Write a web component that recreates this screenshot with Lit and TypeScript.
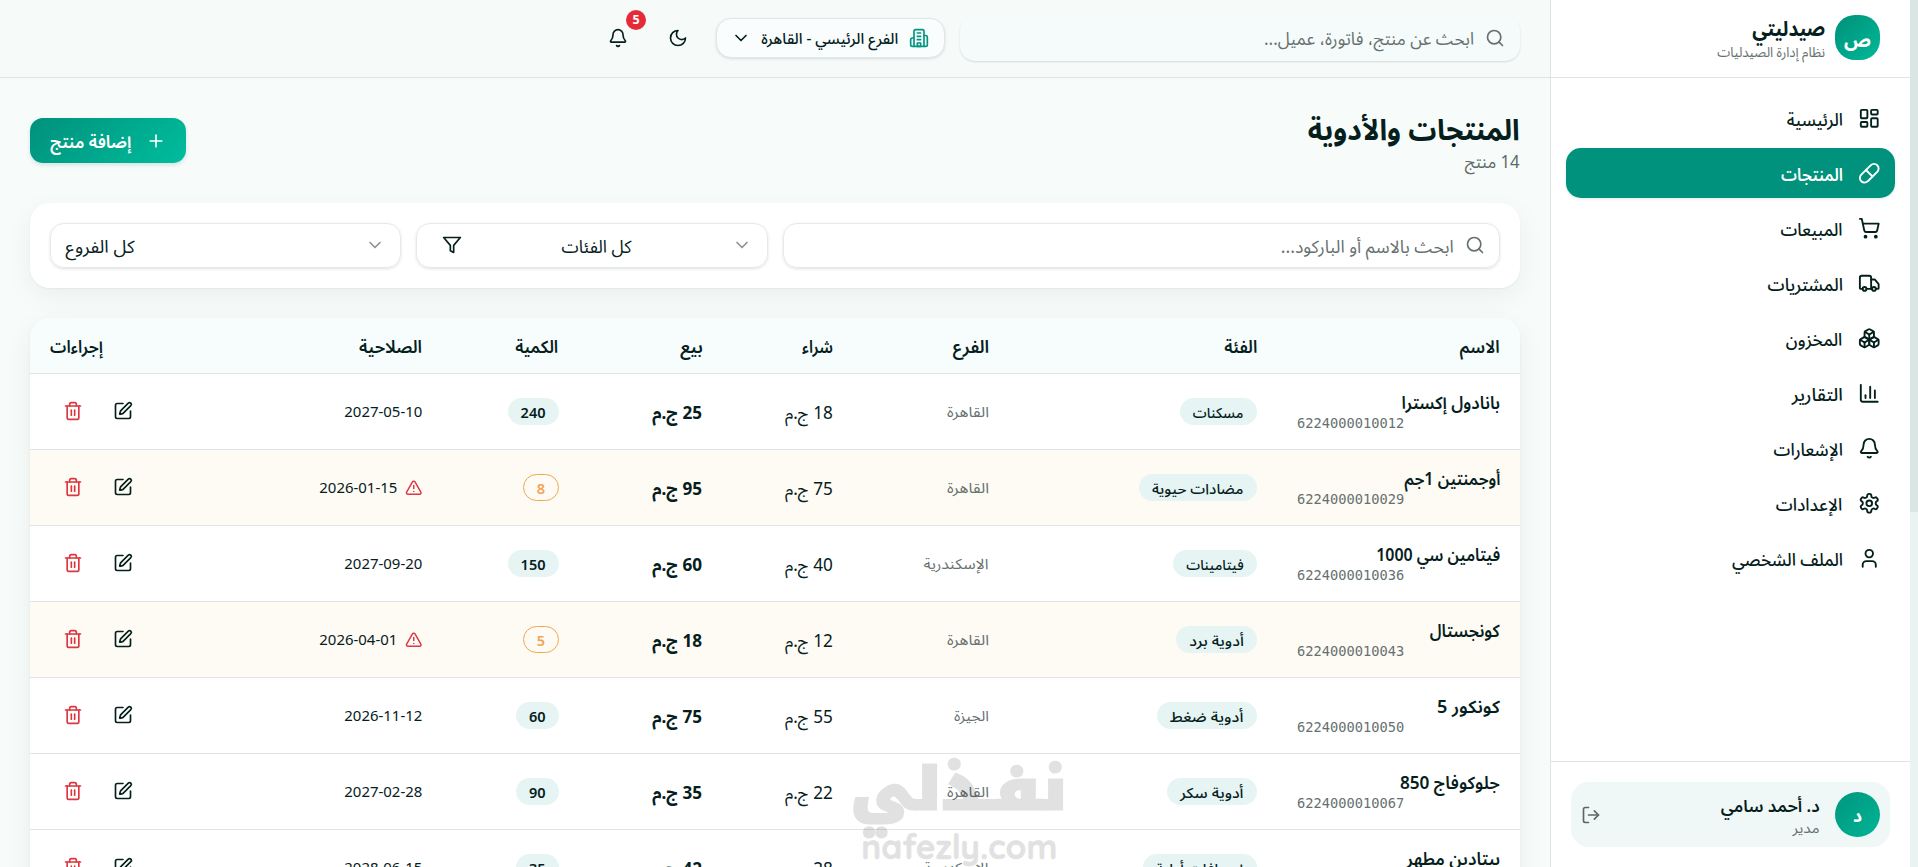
import { LitElement, html, css, svg, nothing } from "lit";
import { customElement, property, query } from "lit/decorators.js";

/* Lucide-style icon set */
const ICONS: Record<string, unknown> = {
  dashboard: svg`<rect width="7" height="9" x="3" y="3" rx="1"/><rect width="7" height="5" x="14" y="3" rx="1"/><rect width="7" height="9" x="14" y="12" rx="1"/><rect width="7" height="5" x="3" y="16" rx="1"/>`,
  pill: svg`<path d="m10.5 20.5 10-10a4.95 4.95 0 1 0-7-7l-10 10a4.95 4.95 0 1 0 7 7Z"/><path d="m8.5 8.5 7 7"/>`,
  cart: svg`<circle cx="8" cy="21" r="1"/><circle cx="19" cy="21" r="1"/><path d="M2.05 2.05h2l2.66 12.42a2 2 0 0 0 2 1.58h9.78a2 2 0 0 0 1.95-1.57l1.65-7.43H5.12"/>`,
  truck: svg`<path d="M14 18V6a2 2 0 0 0-2-2H4a2 2 0 0 0-2 2v11a1 1 0 0 0 1 1h2"/><path d="M15 18H9"/><path d="M19 18h2a1 1 0 0 0 1-1v-3.65a1 1 0 0 0-.22-.624l-3.48-4.35A1 1 0 0 0 17.52 8H14"/><circle cx="17" cy="18" r="2"/><circle cx="7" cy="18" r="2"/>`,
  boxes: svg`<path d="M2.97 12.92A2 2 0 0 0 2 14.63v3.24a2 2 0 0 0 .97 1.71l3 1.8a2 2 0 0 0 2.06 0L12 19v-5.5l-5-3-4.03 2.42Z"/><path d="m7 16.5-4.74-2.85"/><path d="m7 16.5 5-3"/><path d="M7 16.5v5.17"/><path d="M12 13.5V19l3.97 2.38a2 2 0 0 0 2.06 0l3-1.8a2 2 0 0 0 .97-1.71v-3.24a2 2 0 0 0-.97-1.71L17 10.5l-5 3Z"/><path d="m17 16.5-5-3"/><path d="m17 16.5 4.74-2.85"/><path d="M17 16.5v5.17"/><path d="M7.97 4.42A2 2 0 0 0 7 6.13v4.37l5 3 5-3V6.13a2 2 0 0 0-.97-1.71l-3-1.8a2 2 0 0 0-2.06 0l-3 1.8Z"/><path d="M12 8 7.26 5.15"/><path d="m12 8 4.74-2.85"/><path d="M12 13.5V8"/>`,
  chart: svg`<path d="M3 3v16a2 2 0 0 0 2 2h16"/><path d="M18 17V9"/><path d="M13 17V5"/><path d="M8 17v-3"/>`,
  bell: svg`<path d="M10.268 21a2 2 0 0 0 3.464 0"/><path d="M3.262 15.326A1 1 0 0 0 4 17h16a1 1 0 0 0 .74-1.673C19.41 13.956 18 12.499 18 8A6 6 0 0 0 6 8c0 4.499-1.411 5.956-2.738 7.326"/>`,
  settings: svg`<path d="M12.22 2h-.44a2 2 0 0 0-2 2v.18a2 2 0 0 1-1 1.73l-.43.25a2 2 0 0 1-2 0l-.15-.08a2 2 0 0 0-2.73.73l-.22.38a2 2 0 0 0 .73 2.73l.15.1a2 2 0 0 1 1 1.72v.51a2 2 0 0 1-1 1.74l-.15.09a2 2 0 0 0-.73 2.73l.22.38a2 2 0 0 0 2.73.73l.15-.08a2 2 0 0 1 2 0l.43.25a2 2 0 0 1 1 1.73V20a2 2 0 0 0 2 2h.44a2 2 0 0 0 2-2v-.18a2 2 0 0 1 1-1.73l.43-.25a2 2 0 0 1 2 0l.15.08a2 2 0 0 0 2.73-.73l.22-.39a2 2 0 0 0-.73-2.73l-.15-.08a2 2 0 0 1-1-1.74v-.5a2 2 0 0 1 1-1.74l.15-.09a2 2 0 0 0 .73-2.73l-.22-.38a2 2 0 0 0-2.73-.73l-.15.08a2 2 0 0 1-2 0l-.43-.25a2 2 0 0 1-1-1.73V4a2 2 0 0 0-2-2z"/><circle cx="12" cy="12" r="3"/>`,
  user: svg`<path d="M19 21v-2a4 4 0 0 0-4-4H9a4 4 0 0 0-4 4v2"/><circle cx="12" cy="7" r="4"/>`,
  logout: svg`<path d="m16 17 5-5-5-5"/><path d="M21 12H9"/><path d="M9 21H5a2 2 0 0 1-2-2V5a2 2 0 0 1 2-2h4"/>`,
  search: svg`<circle cx="11" cy="11" r="8"/><path d="m21 21-4.34-4.34"/>`,
  building: svg`<path d="M6 22V4a2 2 0 0 1 2-2h8a2 2 0 0 1 2 2v18Z"/><path d="M6 12H4a2 2 0 0 0-2 2v6a2 2 0 0 0 2 2h2"/><path d="M18 9h2a2 2 0 0 1 2 2v9a2 2 0 0 1-2 2h-2"/><path d="M10 6h4"/><path d="M10 10h4"/><path d="M10 14h4"/><path d="M10 18h4v4h-4z"/>`,
  chevron: svg`<path d="m6 9 6 6 6-6"/>`,
  moon: svg`<path d="M12 3a6 6 0 0 0 9 9 9 9 0 1 1-9-9Z"/>`,
  plus: svg`<path d="M5 12h14"/><path d="M12 5v14"/>`,
  filter: svg`<path d="M22 3H2l8 9.46V19l4 2v-8.54L22 3z"/>`,
  edit: svg`<path d="M12 3H5a2 2 0 0 0-2 2v14a2 2 0 0 0 2 2h14a2 2 0 0 0 2-2v-7"/><path d="M18.375 2.625a1 1 0 0 1 3 3l-9.013 9.014a2 2 0 0 1-.853.505l-2.873.84a.5.5 0 0 1-.62-.62l.84-2.873a2 2 0 0 1 .506-.852z"/>`,
  trash: svg`<path d="M3 6h18"/><path d="M19 6v14a2 2 0 0 1-2 2H7a2 2 0 0 1-2-2V6"/><path d="M8 6V4a2 2 0 0 1 2-2h4a2 2 0 0 1 2 2v2"/><path d="M10 11v6"/><path d="M14 11v6"/>`,
  alert: svg`<path d="m21.73 18-8-14a2 2 0 0 0-3.48 0l-8 14A2 2 0 0 0 4 21h16a2 2 0 0 0 1.73-3"/><path d="M12 9v4"/><path d="M12 17h.01"/>`,
};

@customElement("ui-icon")
export class UiIcon extends LitElement {
  static styles = css`
    :host { display: inline-flex; flex: none; width: 20px; height: 20px; }
    svg { width: 100%; height: 100%; display: block; overflow: visible; }
  `;
  @property() name = "";
  render() {
    return html`<svg viewBox="0 0 24 24" fill="none" stroke="currentColor" stroke-width="2" stroke-linecap="round" stroke-linejoin="round">${ICONS[this.name]}</svg>`;
  }
}

/* One-line label that condenses or stretches its text to a set width */
@customElement("fit-text")
export class FitText extends LitElement {
  static styles = css`
    :host { display: inline-block; flex: none; white-space: nowrap; vertical-align: top; }
    .ink { display: inline-block; transform-origin: 100% 50%; vertical-align: top; }
  `;
  @property({ type: Number }) w = 0;
  @query(".ink") ink!: HTMLElement;
  render() {
    return html`<span class="ink"><slot></slot></span>`;
  }
  firstUpdated() {
    const natural = this.ink.offsetWidth ? this.ink.getBoundingClientRect().width : 0;
    if (!natural || !this.w) return;
    this.style.width = `${this.w}px`;
    this.ink.style.transform = `scaleX(${this.w / natural})`;
    this.ink.style.marginLeft = `${this.w - natural}px`;
  }
}

type Label = [string, number];
interface Product {
  name: Label; code: string; cat: Label; branch: Label;
  buy: number; sell: number; qty: number; date: string; low?: boolean;
}

const CAIRO: Label = ["القاهرة", 42];
const ALEX: Label = ["الإسكندرية", 65];

const NAV: [string, string, number][] = [
  ["dashboard", "الرئيسية", 56],
  ["pill", "المنتجات", 62],
  ["cart", "المبيعات", 62],
  ["truck", "المشتريات", 75.5],
  ["boxes", "المخزون", 56.5],
  ["chart", "التقارير", 51],
  ["bell", "الإشعارات", 69.5],
  ["settings", "الإعدادات", 66.5],
  ["user", "الملف الشخصي", 111],
];

const HEADS: Label[] = [
  ["الاسم", 40], ["الفئة", 33], ["الفرع", 36.5], ["شراء", 31],
  ["بيع", 22.5], ["الكمية", 43], ["الصلاحية", 63], ["إجراءات", 53],
];

const PRODUCTS: Product[] = [
  { name: ["بانادول إكسترا", 98.5], code: "6224000010012", cat: ["مسكنات", 51], branch: CAIRO, buy: 18, sell: 25, qty: 240, date: "2027-05-10" },
  { name: ["أوجمنتين 1جم", 96], code: "6224000010029", cat: ["مضادات حيوية", 92], branch: CAIRO, buy: 75, sell: 95, qty: 8, date: "2026-01-15", low: true },
  { name: ["فيتامين سي 1000", 124], code: "6224000010036", cat: ["فيتامينات", 58], branch: ALEX, buy: 40, sell: 60, qty: 150, date: "2027-09-20" },
  { name: ["كونجستال", 70], code: "6224000010043", cat: ["أدوية برد", 55], branch: CAIRO, buy: 12, sell: 18, qty: 5, date: "2026-04-01", low: true },
  { name: ["كونكور 5", 63], code: "6224000010050", cat: ["أدوية ضغط", 74], branch: ["الجيزة", 35], buy: 55, sell: 75, qty: 60, date: "2026-11-12" },
  { name: ["جلوكوفاج 850", 100], code: "6224000010067", cat: ["أدوية سكر", 64], branch: CAIRO, buy: 22, sell: 35, qty: 90, date: "2027-02-28" },
  { name: ["بيتادين مطهر", 94], code: "6224000010074", cat: ["إسعافات أولية", 88], branch: ALEX, buy: 28, sell: 42, qty: 35, date: "2028-06-15" },
];

@customElement("app-root")
export class AppRoot extends LitElement {
  static styles = css`
    :host {
      display: flex; direction: rtl; position: relative; box-sizing: border-box;
      width: 100%; height: 867px; overflow: hidden;
      background: #f7fcfb; color: #05201c;
      font: 400 17.5px/25px "Noto Sans", "Noto Sans Arabic", "DejaVu Sans", sans-serif;
    }
    * { box-sizing: border-box; }

    .scrollbar { flex: none; width: 8px; background: #eaf3f1; }
    .thumb { height: 512px; background: #dbe5e3; }

    .side { flex: none; width: 360px; display: flex; flex-direction: column; background: #fefffe; border-left: 1px solid #dfe5e4; }
    .brand { height: 78px; display: flex; align-items: center; gap: 10px; padding: 0 30px 3px 0; border-bottom: 1px solid #dfe5e4; }
    .logo { width: 45px; height: 45px; flex: none; display: flex; align-items: center; justify-content: center; border-radius: 20px; padding-top: 6px; background: linear-gradient(135deg, #009079, #00b998); color: #fff; font-size: 19px; font-weight: 700; line-height: 28px; }
    .brand-text { display: flex; flex-direction: column; align-items: flex-start; }
    .brand-name { font-size: 21px; font-weight: 700; line-height: 25px; margin-top: 3px; }
    .brand-sub { font-size: 14px; line-height: 20px; color: #66716f; margin-top: 1px; }

    .nav { flex: 1; display: flex; flex-direction: column; gap: 5px; padding: 15px; }
    .item { height: 50px; display: flex; align-items: center; gap: 15px; padding: 0 15px; border-radius: 15px; font-weight: 500; }
    .item ui-icon { width: 22.5px; height: 22.5px; }
    .item fit-text { margin-top: 2px; }
    .item.active { background: #00927c; color: #fff; font-weight: 600; box-shadow: 0 1px 3px rgba(0, 80, 66, .12); }

    .foot { border-top: 1px solid #dfe5e4; padding: 20px; }
    .me { height: 65px; display: flex; align-items: center; gap: 15px; padding: 10px; border-radius: 18px; background: #f0f8f7; }
    .avatar { width: 45px; height: 45px; flex: none; display: flex; align-items: center; justify-content: center; border-radius: 50%; padding-top: 1px; background: linear-gradient(135deg, #009680, #00b494); color: #fff; font-weight: 700; }
    .me-text { flex: 1; display: flex; flex-direction: column; align-items: flex-start; padding-top: 1px; }
    .me-name { font-weight: 600; font-size: 17px; line-height: 24px; }
    .me-role { font-size: 14px; line-height: 19px; color: #66716f; }
    .me ui-icon { color: #5b6765; }

    .main { flex: 1; min-width: 0; display: flex; flex-direction: column; }
    .top { flex: none; height: 78px; display: flex; align-items: center; gap: 15px; padding: 0 30px 1px; border-bottom: 1px solid #dfe5e4; background: #f6fbfa; }
    .top-search { width: 560px; height: 45px; display: flex; align-items: center; gap: 11px; padding: 0 15px; border-radius: 15px; background: #f5fbfa; color: #66716f; box-shadow: 0 1px 2px rgba(0, 20, 15, .14); }
    .top-search fit-text, .field fit-text { margin-top: 1px; }
    .branch { width: 229px; height: 40px; display: flex; align-items: center; justify-content: space-between; padding: 0 15px 0 14px; border-radius: 15px; border: 1px solid #e0e7e6; background: #f9fdfd; box-shadow: 0 1px 3px rgba(0, 20, 15, .12); font-size: 15px; font-weight: 500; margin-left: 1px; }
    .branch .place { color: #009680; }
    .round { position: relative; width: 45px; height: 45px; display: flex; align-items: center; justify-content: center; }
    .count { position: absolute; top: -6px; right: -6px; width: 20px; height: 20px; border-radius: 50%; background: #e62b36; color: #fff; font-size: 12.5px; font-weight: 700; line-height: 20px; text-align: center; }

    .content { display: flex; flex-direction: column; padding: 0 30px; }
    .intro { height: 125px; display: flex; justify-content: space-between; align-items: flex-start; }
    .titles { display: flex; flex-direction: column; align-items: flex-start; padding-top: 33px; }
    .title { font-size: 29px; font-weight: 700; line-height: 36px; }
    .total { color: #5f6b69; line-height: 25px; margin-top: 2px; }
    .add { width: 156px; height: 45px; margin-top: 40px; display: flex; align-items: center; justify-content: space-between; padding: 0 20px; border-radius: 13px; color: #fff; font-weight: 600; background: linear-gradient(135deg, #00917b, #00bd9d); box-shadow: 0 2px 4px rgba(0, 100, 80, .16); }
    .add fit-text { margin-top: 1px; }

    .filters { height: 85px; display: flex; gap: 15px; padding: 20px; border-radius: 20px; background: #fff; box-shadow: 0 1px 2px rgba(0, 20, 15, .05), 0 8px 28px rgba(0, 20, 15, .05); }
    .field { height: 45px; display: flex; align-items: center; gap: 11px; padding: 0 14px; border: 1px solid #e5eae9; border-radius: 14px; box-shadow: 0 1px 3px rgba(0, 20, 15, .13); }
    .field ui-icon { margin-bottom: 1px; }
    .find { flex: 1; color: #66716f; }
    .select { width: 351.25px; padding: 0 15px; justify-content: space-between; }
    .select .arrow { color: #8b9593; }
    .with-icon { padding-left: 25px; }

    .table { margin-top: 30px; border-radius: 20px 20px 0 0; background: #fff; box-shadow: 0 8px 28px rgba(0, 20, 15, .06), 0 1px 3px rgba(0, 20, 15, .05); }
    .row { display: grid; grid-template-columns: 243px 268px 156px 130.5px 144px 136.5px 1fr 130px; height: 76px; align-items: center; border-bottom: 1px solid #e0e5e4; }
    .row.low { background: #fefaf4; }
    .head { height: 56px; padding-top: 2px; background: #f7fdfd; border-radius: 20px 20px 0 0; font-weight: 600; }
    .cell { padding: 0 20px; display: flex; align-items: center; }
    .cell.end { justify-content: flex-end; }
    .product { flex-direction: column; align-items: stretch; }
    .name { font-weight: 600; line-height: 24px; margin-top: -3px; }
    .code { direction: ltr; text-align: left; font: 13.7px/16px "DejaVu Sans Mono", monospace; color: #66716f; margin-top: 1px; }
    .tag { height: 27px; display: inline-flex; align-items: center; padding: 0 13.5px; border-radius: 13.5px; background: #e6f5f4; font-size: 14.5px; font-weight: 500; line-height: 26px; }
    .tag.num { font-weight: 600; padding: 0 13px; }
    .tag.warn { background: transparent; border: 1px solid #eda84d; color: #f0a455; padding: 0 12.5px; }
    .where { font-size: 14.5px; color: #66716f; }
    .sell { font-weight: 700; }
    .price { padding-top: 2px; }
    .date { font-size: 15px; gap: 7.5px; }
    .date ui-icon { width: 17.5px; height: 17.5px; color: #d93846; }
    .acts { gap: 5px; padding: 0 0 2px 20px; }
    .act { width: 45px; height: 45px; display: flex; align-items: center; justify-content: center; }
    .act.del { color: #dc3640; }

    .mark { position: absolute; left: 851px; top: 751px; width: 216px; height: 116px; direction: rtl; color: #000; opacity: .115; pointer-events: none; }
    .mark-ar { position: absolute; right: 0; top: 1px; font: 900 58px/76px "Noto Kufi Arabic", "DejaVu Sans", sans-serif; -webkit-text-stroke: 3px #000; }
    .mark-en { position: absolute; right: 10px; top: 73px; direction: ltr; font: 700 34px/46px "Quicksand", "Lato", sans-serif; -webkit-text-stroke: .6px #000; }
  `;

  private row(p: Product) {
    return html`<div class="row ${p.low ? "low" : ""}">
      <div class="cell product">
        <div class="name"><fit-text w=${p.name[1]}>${p.name[0]}</fit-text></div>
        <div class="code">${p.code}</div>
      </div>
      <div class="cell"><span class="tag"><fit-text w=${p.cat[1] - 0.5}>${p.cat[0]}</fit-text></span></div>
      <div class="cell where"><fit-text w=${p.branch[1]}>${p.branch[0]}</fit-text></div>
      <div class="cell price"><fit-text w="48">${p.buy} ج.م</fit-text></div>
      <div class="cell price sell"><fit-text w="50">${p.sell} ج.م</fit-text></div>
      <div class="cell"><span class="tag num ${p.low ? "warn" : ""}">${p.qty}</span></div>
      <div class="cell date">${p.low ? html`<ui-icon name="alert"></ui-icon>` : nothing}<fit-text dir="ltr" w="78">${p.date}</fit-text></div>
      <div class="cell end acts">
        <span class="act"><ui-icon name="edit"></ui-icon></span>
        <span class="act del"><ui-icon name="trash"></ui-icon></span>
      </div>
    </div>`;
  }

  render() {
    return html`
      <div class="scrollbar"><div class="thumb"></div></div>
      <aside class="side">
        <div class="brand">
          <div class="logo">ص</div>
          <div class="brand-text">
            <div class="brand-name"><fit-text w="73">صيدليتي</fit-text></div>
            <div class="brand-sub"><fit-text w="108">نظام إدارة الصيدليات</fit-text></div>
          </div>
        </div>
        <nav class="nav">
          ${NAV.map(([icon, text, w], i) => html`<div class="item ${i === 1 ? "active" : ""}"><ui-icon name=${icon}></ui-icon><fit-text w=${w}>${text}</fit-text></div>`)}
        </nav>
        <div class="foot">
          <div class="me">
            <div class="avatar">د</div>
            <div class="me-text">
              <div class="me-name"><fit-text w="99">د. أحمد سامي</fit-text></div>
              <div class="me-role"><fit-text w="27">مدير</fit-text></div>
            </div>
            <ui-icon name="logout"></ui-icon>
          </div>
        </div>
      </aside>
      <main class="main">
        <header class="top">
          <div class="top-search"><ui-icon name="search"></ui-icon><fit-text w="210">ابحث عن منتج، فاتورة، عميل...</fit-text></div>
          <div class="branch"><ui-icon class="place" name="building"></ui-icon><fit-text w="137">الفرع الرئيسي - القاهرة</fit-text><ui-icon name="chevron"></ui-icon></div>
          <div class="round"><ui-icon name="moon"></ui-icon></div>
          <div class="round"><ui-icon name="bell"></ui-icon><span class="count">5</span></div>
        </header>
        <div class="content">
          <section class="intro">
            <div class="titles">
              <div class="title"><fit-text w="212">المنتجات والأدوية</fit-text></div>
              <div class="total"><fit-text w="55">14 منتج</fit-text></div>
            </div>
            <div class="add"><ui-icon name="plus"></ui-icon><fit-text w="81">إضافة منتج</fit-text></div>
          </section>
          <section class="filters">
            <div class="field find"><ui-icon name="search"></ui-icon><fit-text w="173">ابحث بالاسم أو الباركود...</fit-text></div>
            <div class="field select with-icon"><ui-icon class="arrow" name="chevron"></ui-icon><fit-text w="70">كل الفئات</fit-text><ui-icon name="filter"></ui-icon></div>
            <div class="field select"><ui-icon class="arrow" name="chevron"></ui-icon><fit-text w="69">كل الفروع</fit-text></div>
          </section>
          <section class="table">
            <div class="row head">${HEADS.map(([t, w], i) => html`<div class="cell ${i === 7 ? "end" : ""}"><fit-text w=${w}>${t}</fit-text></div>`)}</div>
            ${PRODUCTS.map((p) => this.row(p))}
          </section>
        </div>
      </main>
      <div class="mark">
        <div class="mark-ar"><fit-text w="216">نفـذلي</fit-text></div>
        <div class="mark-en"><fit-text w="196">nafezly.com</fit-text></div>
      </div>
    `;
  }
}
